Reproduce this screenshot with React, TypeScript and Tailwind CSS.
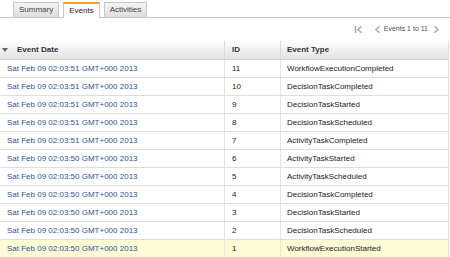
import React from "react";

const rows = [
  { date: "Sat Feb 09 02:03:51 GMT+000 2013", id: 11, type: "WorkflowExecutionCompleted" },
  { date: "Sat Feb 09 02:03:51 GMT+000 2013", id: 10, type: "DecisionTaskCompleted" },
  { date: "Sat Feb 09 02:03:51 GMT+000 2013", id: 9, type: "DecisionTaskStarted" },
  { date: "Sat Feb 09 02:03:51 GMT+000 2013", id: 8, type: "DecisionTaskScheduled" },
  { date: "Sat Feb 09 02:03:51 GMT+000 2013", id: 7, type: "ActivityTaskCompleted" },
  { date: "Sat Feb 09 02:03:50 GMT+000 2013", id: 6, type: "ActivityTaskStarted" },
  { date: "Sat Feb 09 02:03:50 GMT+000 2013", id: 5, type: "ActivityTaskScheduled" },
  { date: "Sat Feb 09 02:03:50 GMT+000 2013", id: 4, type: "DecisionTaskCompleted" },
  { date: "Sat Feb 09 02:03:50 GMT+000 2013", id: 3, type: "DecisionTaskStarted" },
  { date: "Sat Feb 09 02:03:50 GMT+000 2013", id: 2, type: "DecisionTaskScheduled" },
  { date: "Sat Feb 09 02:03:50 GMT+000 2013", id: 1, type: "WorkflowExecutionStarted" },
];

const tabs = ["Summary", "Events", "Activities"];

export default function App() {
  return (
    <div className="w-[450px] h-[257px] overflow-hidden bg-white font-['Liberation_Sans',Arial,sans-serif] text-[8px] text-[#333]">
      {/* tabs */}
      <div className="flex items-end h-[18px] border-b border-[#c8c8c8] pl-[13px] gap-[4px]">
        {tabs.map((t) =>
          t === "Events" ? (
            <div
              key={t}
              className="h-[16px] -mb-px px-[5px] flex items-center bg-white border-x border-[#c8c8c8] border-t-2 border-t-[#f0a030] text-[8px] text-[#222]"
            >
              {t}
            </div>
          ) : (
            <div
              key={t}
              className="h-[15px] px-[5px] flex items-center bg-gradient-to-b from-[#f4f4f4] to-[#dedede] border-x border-t border-[#c8c8c8] text-[8px] text-[#444]"
            >
              {t}
            </div>
          )
        )}
      </div>

      {/* pager */}
      <div className="flex items-center justify-end h-[20px] pr-[10px] mt-[1px] text-[#999]">
        <svg width="9" height="9" viewBox="0 0 9 9" className="mr-[11px]">
          <path d="M1.5 1v7" stroke="#aaa" strokeWidth="1.5" />
          <path d="M7.5 1.2 4 4.5l3.5 3.3" stroke="#aaa" strokeWidth="1.5" fill="none" />
        </svg>
        <svg width="7" height="9" viewBox="0 0 7 9" className="mr-[3px]">
          <path d="M5.5 1.2 2 4.5l3.5 3.3" stroke="#aaa" strokeWidth="1.5" fill="none" />
        </svg>
        <span className="text-[7px] text-[#555] mr-[5px]">Events 1 to 11</span>
        <svg width="7" height="9" viewBox="0 0 7 9">
          <path d="M1.5 1.2 5 4.5 1.5 7.8" stroke="#aaa" strokeWidth="1.5" fill="none" />
        </svg>
      </div>

      {/* table */}
      <div className="w-[449px] border-r border-[#ddd] mt-[2px]">
        <div className="flex h-[19px] bg-gradient-to-b from-[#ffffff] to-[#e2e2e2] border-b border-[#d4d4d4] font-bold text-[#333]">
          <div className="w-[225px] flex items-center border-r border-[#d8d8d8]">
            <svg width="6" height="5" viewBox="0 0 6 5" className="ml-[2px] mr-[9px]">
              <path d="M0 0h6L3 4z" fill="#666" />
            </svg>
            Event Date
          </div>
          <div className="w-[56px] flex items-center pl-[7px] border-r border-[#d8d8d8]">ID</div>
          <div className="flex-1 flex items-center pl-[6px]">Event Type</div>
        </div>
        {rows.map((r, i) => (
          <div
            key={r.id}
            className={`flex h-[18px] border-b border-[#dedede] ${
              i === rows.length - 1 ? "bg-[#fdfbd6]" : "bg-white"
            }`}
          >
            <div className="w-[225px] flex items-center pl-[7px] border-r border-[#e4e4e4] text-[#2f5597]">
              {r.date}
            </div>
            <div className="w-[56px] flex items-center pl-[7px] border-r border-[#e4e4e4] text-[#222]">
              {r.id}
            </div>
            <div className="flex-1 flex items-center pl-[6px] text-[#222]">{r.type}</div>
          </div>
        ))}
      </div>
    </div>
  );
}
